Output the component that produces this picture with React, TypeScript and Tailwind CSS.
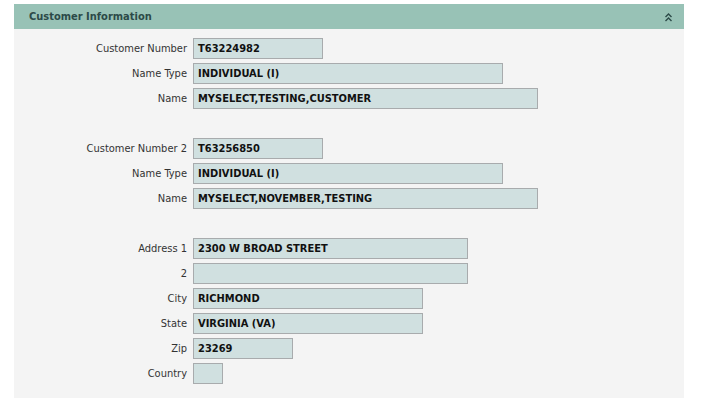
import React from "react";

type Field = { label: string; value: string; width: string };

const groups: Field[][] = [
  [
    { label: "Customer Number", value: "T63224982", width: "w-[130px]" },
    { label: "Name Type", value: "INDIVIDUAL (I)", width: "w-[310px]" },
    { label: "Name", value: "MYSELECT,TESTING,CUSTOMER", width: "w-[345px]" },
  ],
  [
    { label: "Customer Number 2", value: "T63256850", width: "w-[130px]" },
    { label: "Name Type", value: "INDIVIDUAL (I)", width: "w-[310px]" },
    { label: "Name", value: "MYSELECT,NOVEMBER,TESTING", width: "w-[345px]" },
  ],
  [
    { label: "Address 1", value: "2300 W BROAD STREET", width: "w-[275px]" },
    { label: "2", value: "", width: "w-[275px]" },
    { label: "City", value: "RICHMOND", width: "w-[230px]" },
    { label: "State", value: "VIRGINIA (VA)", width: "w-[230px]" },
    { label: "Zip", value: "23269", width: "w-[100px]" },
    { label: "Country", value: "", width: "w-[30px]" },
  ],
];

function Row({ field }: { field: Field }) {
  return (
    <div className="flex items-center h-[25px]">
      <span className="w-[179px] shrink-0 pr-[6px] pt-[1px] text-right text-[11px] text-[#333]">{field.label}</span>
      <div className={`${field.width} h-[21px] flex items-center px-[4px] pt-[1px] bg-[#d0e0e0] border border-[#a8abad] text-[11px] font-bold text-[#111] whitespace-nowrap overflow-hidden`}>
        {field.value}
      </div>
    </div>
  );
}

export default function App() {
  return (
    <div className="w-[706px] h-[408px] bg-white pt-[4px]" style={{ fontFamily: "Tahoma, 'DejaVu Sans Condensed', 'DejaVu Sans', sans-serif" }}>
      <div className="ml-[14px] w-[670px] bg-[#f4f4f4]">
        {/* Header */}
        <div className="h-[25px] bg-[#98c2b6] flex items-center justify-between pl-[15px] pr-[12px] pt-[2px]">
          <span className="text-[11px] font-bold text-[#2c4a48]">Customer Information</span>
          <svg width="7" height="9" viewBox="0 0 7 9" className="text-[#2c4a48]">
            <path d="M0.5 4 L3.5 1 L6.5 4" fill="none" stroke="currentColor" strokeWidth="1.4" />
            <path d="M0.5 8 L3.5 5 L6.5 8" fill="none" stroke="currentColor" strokeWidth="1.4" />
          </svg>
        </div>

        {/* Fields */}
        <div className="pt-[7px] pb-[12px] flex flex-col gap-[25px]">
          {groups.map((g, i) => (
            <div key={i} className="flex flex-col">
              {g.map((f, j) => (
                <Row key={j} field={f} />
              ))}
            </div>
          ))}
        </div>
      </div>
    </div>
  );
}
